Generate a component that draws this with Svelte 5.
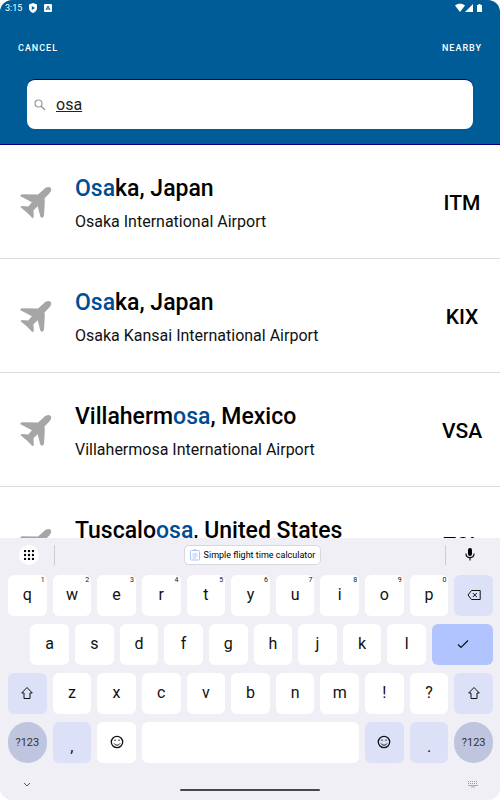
<script lang="ts">
	type Airport = { city: string; name: string; code: string };
	type Key = {
		label: string;
		hint?: string;
		icon?: string;
		span?: number;
		start?: number;
		kind?: string;
	};

	const airports: Airport[] = [
		{ city: 'Osaka, Japan', name: 'Osaka International Airport', code: 'ITM' },
		{ city: 'Osaka, Japan', name: 'Osaka Kansai International Airport', code: 'KIX' },
		{ city: 'Villahermosa, Mexico', name: 'Villahermosa International Airport', code: 'VSA' },
		{ city: 'Tuscaloosa, United States', name: '', code: 'TCL' }
	];

	// two grid columns per letter key, so the second row can be shifted by half a key
	const keys: Key[] = [
		...[...'qwertyuiop'].map((label, i) => ({ label, hint: String((i + 1) % 10) })),
		{ label: 'Backspace', icon: 'backspace', kind: 'soft' },
		...[...'asdfghjkl'].map((label, i) => ({ label, start: i === 0 ? 2 : undefined })),
		{ label: 'Done', icon: 'check', kind: 'enter', span: 3 },
		{ label: 'Shift', icon: 'shift', kind: 'soft' },
		...[...'zxcvbnm!?'].map((label) => ({ label })),
		{ label: 'Right shift', icon: 'shift', kind: 'soft' },
		{ label: '?123', kind: 'mode' },
		{ label: ',', kind: 'soft low' },
		{ label: 'Emoji', icon: 'smile' },
		{ label: 'Space', icon: 'none', span: 10 },
		{ label: 'Emoji', icon: 'smile', kind: 'soft' },
		{ label: '.', kind: 'soft low' },
		{ label: '?123', kind: 'mode' }
	];

	let query = $state('osa');

	function split(text: string): [string, string, string] {
		const at = query ? text.toLowerCase().indexOf(query.toLowerCase()) : -1;
		if (at < 0) return [text, '', ''];
		const end = at + query.length;
		return [text.slice(0, at), text.slice(at, end), text.slice(end)];
	}

	function press(key: Key) {
		if (key.icon === 'backspace') query = query.slice(0, -1);
		else if (key.label === 'Space') query += ' ';
		else if (!key.icon && key.kind !== 'mode') query += key.label;
	}
</script>

<div class="screen">
	<header>
		<div class="status">
			<span>3:15</span>
			<svg width="10" height="10" viewBox="0 0 10 10">
				<path d="M5 0 9 1.5V5c0 2.400-1.600 4.200-4 5C2.600 9.200 1 7.400 1 5V1.500z" fill="#fff" />
				<path d="M3.800 3v4L7 5z" fill="#005c97" />
			</svg>
			<svg width="8" height="8" viewBox="0 0 8 8">
				<rect width="8" height="8" rx="1" fill="#fff" />
				<path d="M2 6 4 2l2 4M3 5h2" fill="none" stroke="#005c97" />
			</svg>
			<svg class="signal" width="28" height="10" viewBox="0 0 28 10">
				<path
					d="M0 2.500C2.600.300 7.400.300 10 2.500L5 9zM10 9l8-8v8zM22 2h1.500V1h2v1H27v7h-5z"
					fill="#fff"
				/>
			</svg>
		</div>
		<nav>
			<button type="button">CANCEL</button>
			<button type="button">NEARBY</button>
		</nav>
		<label class="search">
			<svg width="12" height="12" viewBox="0 0 12 12" fill="none" stroke="#9a9a9a">
				<circle cx="4.500" cy="4.500" r="3.500" stroke-width="1.200" />
				<path d="m7 7 4 4" stroke-width="1.500" />
			</svg>
			<input type="text" aria-label="Search airports" bind:value={query} spellcheck="false" />
		</label>
	</header>

	<main>
		{#each airports as airport (airport.code)}
			{@const [before, match, after] = split(airport.city)}
			<article>
				<svg width="32" height="32" viewBox="0 0 32 32">
					<path
						d="M30.500.800c1.300 1.200.700 3.700-1 5.500l-5 5.200.300 3.500-.8 14-1.800 2-1.800-1.300-2.700-10.400-4.200 4 .3 6.700-1.300 1.200-5.300-5.500L.600 20.200l1-1.200 6.700.500 3.600-4.200L.500 9.300.200 8.500l1.600-1.300 16.200.400 6.200-5.600c1.900-1.900 5-2.500 6.300-1.200z"
						fill="#a6a6a6"
					/>
				</svg>
				<div class="place">
					<h2>{before}<mark>{match}</mark>{after}</h2>
					<p>{airport.name}</p>
				</div>
				<strong>{airport.code}</strong>
			</article>
		{/each}
	</main>

	<section class="keyboard">
		<div class="strip">
			<button class="menu" type="button" aria-label="Keyboard menu">
				<svg width="10" height="10" viewBox="0 0 10 10">
					{#each [1, 5, 9] as y}
						{#each [1, 5, 9] as x}
							<circle cx={x} cy={y} r="1.200" />
						{/each}
					{/each}
				</svg>
			</button>
			<div class="clip">
				<button class="chip" type="button">
					<svg width="10" height="12" viewBox="0 0 10 12" fill="none" stroke="#afc3ff">
						<rect x=".5" y="1.500" width="9" height="9.500" rx="1" />
						<path d="M3 1.500h4M2.500 5h5M2.500 7h5M2.500 9h3.500" />
						<path d="M4 .5h2" />
					</svg>
					Simple flight time calculator
				</button>
			</div>
			<button class="mic" type="button" aria-label="Voice input">
				<svg width="10" height="13" viewBox="0 0 10 13">
					<rect x="3" y="0" width="4" height="8" rx="2" />
					<path d="M1 5.500C1 11 9 11 9 5.500M5 9.500V12.500" fill="none" stroke="#111" stroke-width="1.200" />
				</svg>
			</button>
		</div>

		<div class="keys">
			{#each keys as key}
				<button
					type="button"
					class="key {key.kind ?? ''}"
					style:grid-column="{key.start ?? 'auto'} / span {key.span ?? 2}"
					aria-label={key.label}
					onclick={() => press(key)}
				>
					{#if key.icon === 'backspace'}
						<svg width="14" height="12" viewBox="0 0 14 12">
							<path d="M4.500 1.500h8.700v9H4.500L1 6zM5.800 4l4 4M9.800 4l-4 4" />
						</svg>
					{:else if key.icon === 'check'}
						<svg width="12" height="10" viewBox="0 0 12 10">
							<path d="m1 5.500 3 3 7-7" stroke-width="1.200" />
						</svg>
					{:else if key.icon === 'shift'}
						<svg width="14" height="14" viewBox="0 0 14 14">
							<path d="m7 1.500 5.300 5.500h-2.300v5.500H4V7H1.700z" />
						</svg>
					{:else if key.icon === 'smile'}
						<svg width="14" height="14" viewBox="0 0 14 14">
							<circle cx="7" cy="7" r="5.700" stroke-width="1.300" />
							<path d="M4 8.500c1.400 2.200 4.600 2.200 6 0" />
							<path d="M4.500 5.300h1M8.500 5.300h1" stroke-width="1.600" />
						</svg>
					{:else if !key.icon}
						{key.label}
					{/if}
					{#if key.hint}<sup>{key.hint}</sup>{/if}
				</button>
			{/each}
		</div>

		<footer>
			<button type="button" aria-label="Hide keyboard">
				<svg width="8" height="6" viewBox="0 0 8 6" fill="none" stroke="#555">
					<path d="m1 1 3 3 3-3" />
				</svg>
			</button>
			<span class="handle"></span>
			<button type="button" aria-label="Switch keyboard">
				<svg width="10" height="7" viewBox="0 0 10 7" fill="none" stroke="#999">
					<path d="M0 .5h10M0 2.500h10" stroke-dasharray="1 1" />
					<path d="M0 4.500h10M3 6h4" stroke-width=".8" />
				</svg>
			</button>
		</footer>
	</section>
</div>

<style>
	:global(body) {
		margin: 0;
		background: #fff;
	}

	.screen {
		display: flex;
		flex-direction: column;
		height: 100vh;
		overflow: hidden;
		border-radius: 12px;
		background: #fff;
		color: #000;
		font-family: Roboto, 'Liberation Sans', sans-serif;
	}

	button {
		display: flex;
		align-items: center;
		justify-content: center;
		padding: 0;
		border: 0;
		background: none;
		color: inherit;
		font: inherit;
	}

	header {
		background: #005c97;
		border-bottom: 1px solid #00007a;
		color: #fff;
	}

	.status {
		display: flex;
		align-items: center;
		height: 16px;
		padding: 0 17px 0 5px;
		font-size: 9px;
		gap: 6px;
	}

	.signal {
		margin-left: auto;
	}

	nav {
		display: flex;
		justify-content: space-between;
		padding: 24px 18px 23px;
	}

	nav button {
		height: 16px;
		font-size: 9px;
		font-weight: 500;
		letter-spacing: 1px;
	}

	.search {
		display: flex;
		align-items: center;
		gap: 8px;
		height: 49px;
		margin: 0 27px 15px;
		padding: 0 7px;
		border-top: 1px solid #00007a;
		border-radius: 8px;
		background: #fff;
	}

	.search input {
		flex: 1;
		min-width: 0;
		border: 0;
		outline: 0;
		background: none;
		color: #222;
		font: 16px Roboto, sans-serif;
		text-decoration: underline;
	}

	main {
		flex: 1;
		min-height: 0;
		overflow: hidden;
	}

	article {
		box-sizing: border-box;
		display: flex;
		align-items: center;
		height: 114px;
		padding: 3px 18px 0 20px;
		border-bottom: 1px solid #dcdddd;
	}

	.place {
		flex: 1;
		padding-left: 23px;
	}

	h2,
	p {
		margin: 0;
	}

	h2 {
		font-size: 23px;
		font-weight: 500;
		line-height: 32px;
	}

	mark {
		background: none;
		color: #004b93;
	}

	p {
		min-height: 24px;
		padding-top: 5px;
		color: #111;
		font-size: 16px;
		line-height: 24px;
	}

	strong {
		width: 40px;
		font-size: 21px;
		font-weight: 500;
		text-align: center;
	}

	.keyboard {
		background: #f0eff6;
	}

	.strip {
		display: flex;
		align-items: center;
		height: 33px;
		padding: 0 20px 4px 19px;
	}

	.menu {
		width: 20px;
		height: 20px;
		border-radius: 50%;
		background: #fff;
	}

	.clip {
		display: flex;
		flex: 1;
		justify-content: center;
		margin: 0 14px 0 15px;
		padding-left: 5px;
		border: solid #ccccd2;
		border-width: 0 1px;
	}

	.chip {
		gap: 4px;
		height: 20px;
		padding: 0 5px;
		border: 1px solid #d7d7df;
		border-radius: 5px;
		background: #fff;
		font-size: 9px;
	}

	.mic {
		width: 20px;
	}

	.keys {
		display: grid;
		grid-template-columns: repeat(22, 1fr);
		row-gap: 8px;
		padding: 0 4px 0 5px;
	}

	.key {
		position: relative;
		height: 41px;
		min-width: 0;
		margin: 0 3px;
		padding-bottom: 2px;
		border-radius: 6px;
		background: #fff;
		color: #111;
		font-size: 16px;
	}

	.key svg {
		margin-top: 1px;
		fill: none;
		stroke: #111;
	}

	.key sup {
		position: absolute;
		top: 1px;
		right: 2px;
		font-size: 7px;
		line-height: 8px;
	}

	.soft {
		background: #dce1f8;
	}

	.enter {
		background: #b1c4ff;
	}

	.mode {
		padding: 0;
		border-radius: 20px;
		background: #bfc5de;
		color: #333;
		font-size: 11px;
	}

	.low {
		padding-top: 10px;
	}

	footer {
		display: flex;
		align-items: center;
		justify-content: space-between;
		height: 37px;
		padding: 0 17px;
	}

	footer button {
		width: 20px;
		height: 20px;
		margin-top: 6px;
	}

	.handle {
		width: 30%;
		height: 2px;
		margin-top: 16px;
		border-radius: 1px;
		background: #47474a;
	}
</style>
